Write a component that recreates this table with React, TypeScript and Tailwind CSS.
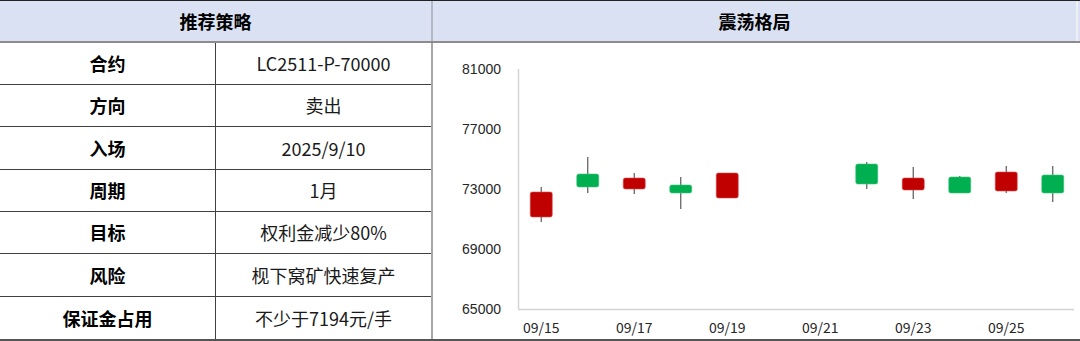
const rows: { label: string; value: string; h: string }[] = [
  { label: '合约', value: 'LC2511-P-70000', h: 'h-[42px]' },
  { label: '方向', value: '卖出', h: 'h-[42px]' },
  { label: '入场', value: '2025/9/10', h: 'h-[43px]' },
  { label: '周期', value: '1月', h: 'h-[42px]' },
  { label: '目标', value: '权利金减少80%', h: 'h-[42px]' },
  { label: '风险', value: '枧下窝矿快速复产', h: 'h-[43px]' },
  { label: '保证金占用', value: '不少于7194元/手', h: 'h-[42px]' },
];

// candles in page pixel coords: slot index, body top/bottom, wick top/bottom
type Candle = { i: number; up: boolean; top: number; bottom: number; hi: number; lo: number };
const candles: Candle[] = [
  { i: 0, up: false, top: 192, bottom: 217, hi: 187, lo: 222 },
  { i: 1, up: true, top: 174, bottom: 187, hi: 157, lo: 193 },
  { i: 2, up: false, top: 178, bottom: 189, hi: 173, lo: 194 },
  { i: 3, up: true, top: 185, bottom: 193, hi: 177, lo: 209 },
  { i: 4, up: false, top: 173, bottom: 198, hi: 173, lo: 198 },
  { i: 7, up: true, top: 164, bottom: 184, hi: 162, lo: 189 },
  { i: 8, up: false, top: 178, bottom: 190, hi: 167, lo: 199 },
  { i: 9, up: true, top: 177, bottom: 193, hi: 176, lo: 193 },
  { i: 10, up: false, top: 172, bottom: 191, hi: 166, lo: 193 },
  { i: 11, up: true, top: 175, bottom: 193, hi: 166, lo: 202 },
];

const yTicks = [
  { v: '81000', y: 69 },
  { v: '77000', y: 129 },
  { v: '73000', y: 189 },
  { v: '69000', y: 249 },
  { v: '65000', y: 309 },
];

const xTicks = ['09/15', '09/17', '09/19', '09/21', '09/23', '09/25'];

const OX = 433;
const OY = 43;
const slot = 46.5;
const x0 = 518;

function Chart() {
  return (
    <svg width={645} height={296} className="block">
      <line x1={x0 - OX + 0.5} y1={69 - OY} x2={x0 - OX + 0.5} y2={309 - OY} stroke="#d4d4d4" strokeWidth={1.5} />
      <line x1={x0 - OX} y1={309 - OY + 0.5} x2={1074 - OX} y2={309 - OY + 0.5} stroke="#d4d4d4" strokeWidth={1.5} />
      {yTicks.map((t) => (
        <text
          key={t.v}
          x={501 - OX}
          y={t.y - OY + 5}
          textAnchor="end"
          fontSize={14}
          fill="#262626"
          fontFamily='"Liberation Sans", Arial, sans-serif'
        >
          {t.v}
        </text>
      ))}
      {xTicks.map((t, k) => (
        <text
          key={t}
          x={x0 + slot * (k * 2 + 0.5) - OX}
          y={333 - OY}
          textAnchor="middle"
          fontSize={14}
          fill="#262626"
          fontFamily='"Noto Sans CJK SC", "Noto Sans", sans-serif'
        >
          {t}
        </text>
      ))}
      {candles.map((c) => {
        const cx = x0 + slot * (c.i + 0.5) - OX;
        const color = c.up ? '#00b050' : '#c00000';
        return (
          <g key={c.i}>
            <line x1={cx} y1={c.hi - OY} x2={cx} y2={c.lo - OY} stroke="#595959" strokeWidth={1.2} />
            <rect
              x={cx - 11}
              y={c.top - OY}
              width={22}
              height={c.bottom - c.top}
              rx={2}
              fill={color}
              stroke={c.up ? '#3fc47a' : '#d84a4a'}
              strokeWidth={0.6}
            />
          </g>
        );
      })}
    </svg>
  );
}

export default function App() {
  return (
    <div
      className="w-[1080px] h-[341px] bg-white border-t border-b-2 border-t-[#222] border-b-[#555] box-border text-black overflow-hidden"
      style={{ fontFamily: '"Noto Sans CJK SC", "Noto Sans", sans-serif' }}
    >
      {/* Header */}
      <div className="flex h-[40px] bg-[#d9e1f2] border-b-2 border-b-[#8c8c8c] box-content">
        <div className="w-[433px] shrink-0 flex items-center justify-center border-r-2 border-r-[#b4b8c4] text-[18px] font-bold">
          推荐策略
        </div>
        <div className="w-[645px] flex items-center justify-center text-[18px] font-bold border-r-2 border-r-[#eef0f6]">
          震荡格局
        </div>
      </div>

      {/* Body */}
      <div className="flex">
        <div className="w-[433px] shrink-0 border-r-2 border-r-[#a6a6a6] flex flex-col">
          {rows.map((r, idx) => (
            <div
              key={r.label}
              className={`flex box-border ${r.h} ${idx < rows.length - 1 ? 'border-b border-b-[#404040]' : ''}`}
            >
              <div className="w-[216px] shrink-0 border-r border-r-[#404040] flex items-center justify-center text-[18px] font-bold">
                {r.label}
              </div>
              <div className="flex-1 flex items-center justify-center text-[18px] text-[#1a1a1a]">
                {r.value}
              </div>
            </div>
          ))}
        </div>
        <div className="flex-1">
          <Chart />
        </div>
      </div>
    </div>
  );
}
